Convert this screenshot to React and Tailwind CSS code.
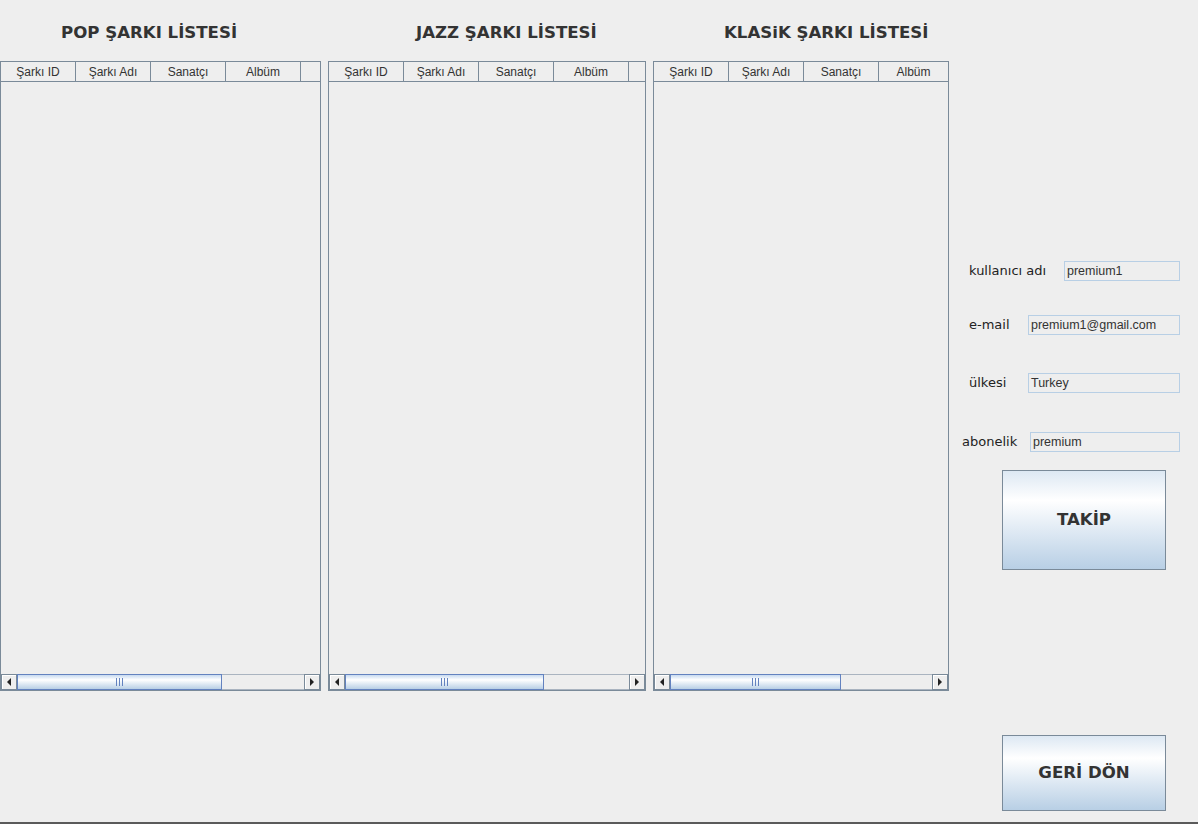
import React from "react";

const columns = ["Şarkı ID", "Şarkı Adı", "Sanatçı", "Albüm"];

function Arrow({ dir }) {
    return (
        <div className="w-[16px] h-full shrink-0 border border-[#7a8a99] bg-[#eeeeee] flex items-center justify-center shadow-[inset_1px_1px_0_#ffffff]">
            <svg width="6" height="8" viewBox="0 0 6 8">
                {dir === "left" ? (
                    <polygon points="5,0 5,8 1,4" fill="#222" />
                ) : (
                    <polygon points="1,0 1,8 5,4" fill="#222" />
                )}
            </svg>
        </div>
    );
}

function HScroll({ thumb }) {
    return (
        <div className="h-[16px] flex shrink-0">
            <Arrow dir="left" />
            <div
                className="h-full border border-[#6382bf] bg-linear-to-b from-[#c8daf0] via-white via-35% to-[#b8cfe5] flex items-center justify-center gap-[2px]"
                style={{ width: thumb }}
            >
                <div className="w-px h-[8px] bg-[#6382bf]" />
                <div className="w-px h-[8px] bg-[#6382bf]" />
                <div className="w-px h-[8px] bg-[#6382bf]" />
            </div>
            <div className="flex-1 h-full bg-[#eeeeee] border-y border-[#aab4c0]" />
            <Arrow dir="right" />
        </div>
    );
}

function SongTable({ width, title, titlePad, thumb, filler }) {
    return (
        <div className="flex flex-col shrink-0" style={{ width }}>
            <div className="h-[61px] flex items-center pt-[5px]" style={{ paddingLeft: titlePad }}>
                <span className="font-['DejaVu_Sans'] font-bold text-[16.6px] text-[#333333] whitespace-nowrap">
                    {title}
                </span>
            </div>
            <div className="h-[630px] border border-[#7a8a99] flex flex-col">
                <div className="h-[20px] flex border-b border-[#7a8a99] shrink-0">
                    {columns.map((col, i) => (
                        <div
                            key={col}
                            className={`h-full flex items-center justify-center text-[12px] text-[#333333] ${
                                i === 3 && !filler ? "flex-1" : "w-[75px] border-r border-[#7a8a99]"
                            }`}
                        >
                            {col}
                        </div>
                    ))}
                    {filler && <div className="flex-1" />}
                </div>
                <div className="flex-1" />
                <HScroll thumb={thumb} />
            </div>
        </div>
    );
}

function InfoRow({ label, value, labelPad, fieldWidth, mt }) {
    return (
        <div className="flex items-center h-[20px]" style={{ marginTop: mt, paddingLeft: labelPad }}>
            <span className="font-['DejaVu_Sans'] font-medium text-[13px] text-[#222222] whitespace-nowrap">{label}</span>
            <div
                className="ml-auto h-[20px] border border-[#b8cfe5] bg-[#eeeeee] flex items-center px-[2px] text-[12.5px] text-[#333333]"
                style={{ width: fieldWidth }}
            >
                {value}
            </div>
        </div>
    );
}

function MetalButton({ text, height, mt }) {
    return (
        <button
            className="ml-[53px] w-[164px] border border-[#7a8a99] bg-linear-to-b from-[#dde8f3] via-white via-30% to-[#b8cfe5] flex items-center justify-center font-['DejaVu_Sans'] font-bold text-[16.6px] text-[#333333]"
            style={{ height, marginTop: mt }}
        >
            {text}
        </button>
    );
}

export default function App() {
    return (
        <div className="w-[1198px] h-[824px] bg-[#eeeeee] border-b-2 border-[#5a5a5a] flex font-['Liberation_Sans',sans-serif] overflow-hidden">
            <SongTable width={321} title="POP ŞARKI LİSTESİ" titlePad={61} thumb={205} filler />
            <div className="w-[7px] shrink-0" />
            <SongTable width={318} title="JAZZ ŞARKI LİSTESİ" titlePad={88} thumb={199} filler />
            <div className="w-[7px] shrink-0" />
            <SongTable width={296} title="KLASiK ŞARKI LİSTESİ" titlePad={71} thumb={171} />

            {/* user info panel */}
            <div className="flex-1 flex flex-col pr-[18px]">
                <InfoRow label="kullanıcı adı" value="premium1" labelPad={20} fieldWidth={116} mt={261} />
                <InfoRow label="e-mail" value="premium1@gmail.com" labelPad={20} fieldWidth={152} mt={34} />
                <InfoRow label="ülkesi" value="Turkey" labelPad={20} fieldWidth={152} mt={38} />
                <InfoRow label="abonelik" value="premium" labelPad={13} fieldWidth={150} mt={39} />
                <MetalButton text="TAKİP" height={100} mt={18} />
                <MetalButton text="GERİ DÖN" height={76} mt={165} />
            </div>
        </div>
    );
}
